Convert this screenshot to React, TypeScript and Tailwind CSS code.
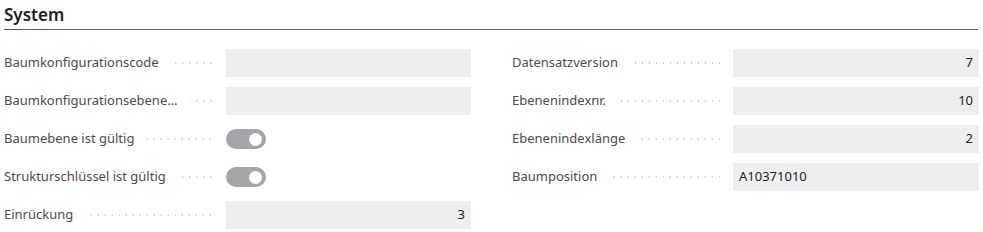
const leftRows = [
  { label: "Baumkonfigurationscode", kind: "field", value: "" },
  { label: "Baumkonfigurationsebene…", kind: "field", value: "" },
  { label: "Baumebene ist gültig", kind: "toggle", value: "" },
  { label: "Strukturschlüssel ist gültig", kind: "toggle", value: "" },
  { label: "Einrückung", kind: "field", value: "3", align: "right" },
];

const rightRows = [
  { label: "Datensatzversion", kind: "field", value: "7", align: "right" },
  { label: "Ebenenindexnr.", kind: "field", value: "10", align: "right" },
  { label: "Ebenenindexlänge", kind: "field", value: "2", align: "right" },
  { label: "Baumposition", kind: "field", value: "A10371010", align: "left" },
];

type Row = {
  label: string;
  kind: string;
  value: string;
  align?: string;
};

function Toggle() {
  return (
    <div className="flex h-[20px] w-[40px] items-center justify-end rounded-full bg-[#a4a5aa] pr-[4px]">
      <div className="h-[13px] w-[13px] rounded-full bg-white" />
    </div>
  );
}

function FieldRow({ row, fieldWidth, gap }: { row: Row; fieldWidth: string; gap: string }) {
  return (
    <div className="flex h-[38px] items-center">
      <div className="flex min-w-0 flex-1 items-center">
        <span className="whitespace-nowrap text-[13px] text-[#4a4a4a]">{row.label}</span>
        <span className="ml-[12px] h-[2px] min-w-[16px] flex-1 bg-[radial-gradient(circle,#c8c8c8_0.9px,transparent_1.1px)] bg-[length:7px_2px] bg-right bg-repeat-x" />
      </div>
      <div className={`${gap} ${fieldWidth} shrink-0`}>
        {row.kind === "toggle" ? (
          <Toggle />
        ) : (
          <div
            className={`flex h-[28px] items-center bg-[#edeeef] px-[6px] text-[13px] text-[#212121] ${
              row.align === "right" ? "justify-end" : "justify-start"
            }`}
          >
            {row.value}
          </div>
        )}
      </div>
    </div>
  );
}

export default function App() {
  return (
    <div className="h-[232px] w-[983px] bg-white px-[4px] font-['Segoe_UI','Noto_Sans',sans-serif]">
      <div className="mr-[1px] border-b border-[#5a5a5a] pt-[4px] pb-[3px]">
        <h2 className="text-[17px] font-semibold leading-[22px] text-[#212121]">System</h2>
      </div>
      <div className="mt-[14px] grid grid-cols-2 gap-x-[41px]">
        <div>
          {leftRows.map((row) => (
            <FieldRow key={row.label} row={row} fieldWidth="w-[245px]" gap="ml-[12px]" />
          ))}
        </div>
        <div>
          {rightRows.map((row) => (
            <FieldRow key={row.label} row={row} fieldWidth="w-[246px]" gap="ml-[10px]" />
          ))}
        </div>
      </div>
    </div>
  );
}
